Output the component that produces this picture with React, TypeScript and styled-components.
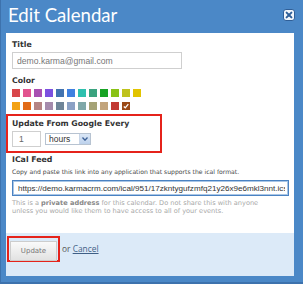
import React from "react";
import styled, { createGlobalStyle } from "styled-components";

const GlobalStyle = createGlobalStyle`
  html, body {
    margin: 0;
    padding: 0;
    background: #fff;
  }
  #root {
    width: 303px;
    height: 284px;
  }
`;

const SWATCHES = [
    "#d8464a", "#e2548f", "#a950b2", "#7c50e0", "#4273b0", "#3f80e0",
    "#2ec0ae", "#3aa37f", "#17a324", "#8ac215", "#bfc21c", "#e2c400",
    "#f3a215", "#e26b17", "#b58584", "#a58bac", "#6f8598", "#8ba1c5",
    "#7fa8a9", "#a5a377", "#c2a47b", "#c23a34", "#9b4a17",
];

const Dialog = styled.div`
    box-sizing: border-box;
    width: 303px;
    height: 284px;
    background: #4b88c7;
    border-left: 1px solid #3d72ad;
    border-bottom: 2px solid #3d72ad;
    padding: 0 9px 6px 5px;
    display: flex;
    flex-direction: column;
`

const Header = styled.div`
    height: 33px;
    display: flex;
    justify-content: space-between;
    align-items: flex-start;
`

const Heading = styled.h1`
    margin: 0;
    padding: 4px 0 0 2px;
    font-family: Lato, "Open Sans", sans-serif;
    font-weight: 400;
    font-size: 18.6px;
    line-height: 1.2;
    color: #fff;
`

const CloseButton = styled.button`
    margin: 9px -1px 0 0;
    padding: 0;
    width: 12px;
    height: 12px;
    border: none;
    background: none;
    display: block;
`

const Panel = styled.div`
    flex: 1;
    background: #fff;
    display: flex;
    flex-direction: column;
`

const Body = styled.div`
    flex: 1;
    padding: 7px 6px 0;
`

const Label = styled.div<{ $gap?: number }>`
    margin-top: ${p => p.$gap ?? 0}px;
    font-family: "DejaVu Sans", Verdana, sans-serif;
    font-weight: 700;
    font-size: 7.8px;
    line-height: 10px;
    color: #333;
`

const TextInput = styled.input`
    box-sizing: border-box;
    display: block;
    margin-top: 2px;
    width: 170px;
    height: 17px;
    padding: 0 4px;
    border: 1px solid #cfcfcf;
    font-family: "Liberation Sans", Arial, sans-serif;
    font-size: 8.6px;
    color: #777;
    outline: none;
`

const SwatchGrid = styled.div`
    margin-top: 3px;
    display: grid;
    grid-template-columns: repeat(12, 8px);
    grid-auto-rows: 8px;
    column-gap: 3px;
    row-gap: 5px;
`

const Swatch = styled.div<{ $color: string }>`
    background: ${p => p.$color};
    display: flex;
    align-items: center;
    justify-content: center;
`

const Highlight = styled.div`
    box-sizing: border-box;
    border: 2px solid #e5231b;
`

const UpdateBox = styled(Highlight)`
    margin: 4px 0 0 -6px;
    width: 156px;
    padding: 3px 0 4px 4px;
`

const Row = styled.div`
    margin-top: 2px;
    display: flex;
    align-items: center;
    gap: 4px;
`

const NumberInput = styled.input`
    box-sizing: border-box;
    width: 29px;
    height: 16px;
    padding: 0 6px;
    border: 1px solid #cfcfcf;
    font-family: "Liberation Sans", Arial, sans-serif;
    font-size: 8.5px;
    color: #666;
    outline: none;
`

const Select = styled.div`
    box-sizing: border-box;
    width: 46px;
    height: 12px;
    border: 1px solid #b7c3d1;
    display: flex;
    align-items: stretch;
`

const SelectText = styled.span`
    flex: 1;
    padding-left: 3px;
    font-family: "Liberation Sans", Arial, sans-serif;
    font-size: 8.5px;
    line-height: 10px;
    color: #333;
`

const SelectArrow = styled.span`
    width: 10px;
    background: linear-gradient(#dbe7f6, #bcd1ec);
    border-left: 1px solid #c8d6e8;
    display: flex;
    align-items: center;
    justify-content: center;
`

const Hint = styled.p`
    margin: 2px 0 0;
    font-family: "DejaVu Sans", Verdana, sans-serif;
    font-size: 6.1px;
    line-height: 9px;
    color: #444;
    white-space: nowrap;
`

const FeedInput = styled.input`
    box-sizing: border-box;
    display: block;
    margin-top: 4px;
    width: 277px;
    height: 16px;
    padding: 0 3px 0 5px;
    border: 1px solid #4a82c2;
    box-shadow: inset 0 0 0 1px #a9c6e6;
    font-family: "Liberation Sans", Arial, sans-serif;
    font-size: 8.1px;
    color: #333;
    outline: none;
`

const Notice = styled.p`
    margin: 4px 0 0;
    font-family: "DejaVu Sans", Verdana, sans-serif;
    font-size: 6.6px;
    line-height: 7.5px;
    color: #a8a8a8;
    white-space: nowrap;

    b {
        color: #888;
    }
`

const Footer = styled.div`
    height: 43px;
    box-sizing: border-box;
    background: #dceaf8;
    padding: 3px 1px 0;
    display: flex;
    align-items: flex-start;
`

const ButtonBox = styled(Highlight)`
    width: 53px;
    height: 26px;
    padding: 1px;
`

const UpdateButton = styled.button`
    box-sizing: border-box;
    width: 100%;
    height: 100%;
    margin: 0;
    padding: 0;
    border: 1px solid #cdcdcd;
    background: linear-gradient(#fafafa, #e2e2e2);
    font-family: "DejaVu Sans", Verdana, sans-serif;
    font-size: 7px;
    color: #777;
`

const Alt = styled.span`
    margin-left: 2px;
    font-family: "Open Sans", sans-serif;
    font-size: 8.4px;
    line-height: 26px;
    color: #555;

    a {
        color: #3f5f86;
        text-decoration: underline;
    }
`

const FEED = "https://demo.karmacrm.com/ical/951/17zkntygufzmfq21y26x9e6mkl3nnt.ics";

export default function App() {
    return (
        <>
            <GlobalStyle/>
            <Dialog>
                <Header>
                    <Heading>Edit Calendar</Heading>
                    <CloseButton aria-label="Close">
                        <svg width="12" height="12" viewBox="0 0 12 12">
                            <rect x="0.5" y="0.5" width="11" height="11" rx="2.5" fill="#f3f7fc" stroke="#2f5f98"/>
                            <path d="M3.6 3.6 L8.4 8.4 M8.4 3.6 L3.6 8.4" stroke="#2f5f98" strokeWidth="2" strokeLinecap="round"/>
                        </svg>
                    </CloseButton>
                </Header>
                <Panel>
                    <Body>
                        <Label>Title</Label>
                        <TextInput readOnly value="demo.karma@gmail.com"/>
                        <Label $gap={7}>Color</Label>
                        <SwatchGrid>
                            {SWATCHES.map((c, i) => (
                                <Swatch key={i} $color={c}>
                                    {i === SWATCHES.length - 1 && (
                                        <svg width="6" height="6" viewBox="0 0 6 6">
                                            <path d="M0.8 3.4 L2.3 4.8 L5.3 1.2" stroke="#fff" strokeWidth="1.3" fill="none"/>
                                        </svg>
                                    )}
                                </Swatch>
                            ))}
                        </SwatchGrid>
                        <UpdateBox>
                            <Label>Update From Google Every</Label>
                            <Row>
                                <NumberInput readOnly value="1"/>
                                <Select>
                                    <SelectText>hours</SelectText>
                                    <SelectArrow>
                                        <svg width="6" height="4" viewBox="0 0 6 4">
                                            <path d="M0.5 0.5 L3 3.2 L5.5 0.5" stroke="#3b5f95" strokeWidth="1.3" fill="none"/>
                                        </svg>
                                    </SelectArrow>
                                </Select>
                            </Row>
                        </UpdateBox>
                        <Label $gap={2}>ICal Feed</Label>
                        <Hint>Copy and paste this link into any application that supports the ical format.</Hint>
                        <FeedInput readOnly value={FEED}/>
                        <Notice>
                            This is a <b>private address</b> for this calendar. Do not share this with anyone
                            <br/>
                            unless you would like them to have access to all of your events.
                        </Notice>
                    </Body>
                    <Footer>
                        <ButtonBox>
                            <UpdateButton>Update</UpdateButton>
                        </ButtonBox>
                        <Alt>or <a href="#">Cancel</a></Alt>
                    </Footer>
                </Panel>
            </Dialog>
        </>
    );
}
